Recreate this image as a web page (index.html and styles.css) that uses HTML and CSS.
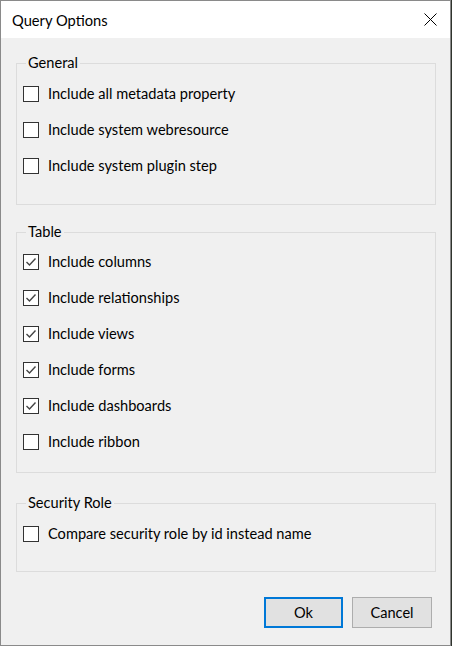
FILE: index.html
```html
<!DOCTYPE html>
<html lang="en">
<head>
<meta charset="utf-8">
<title>Query Options</title>
<link rel="stylesheet" href="styles.css">
</head>
<body>
<div class="window">
  <div class="titlebar">
    <span class="title">Query Options</span>
    <span class="close" aria-label="Close">
      <svg width="13" height="13" viewBox="0 0 13 13"><path d="M0.5 0.5 L12.5 12.5 M12.5 0.5 L0.5 12.5" stroke="#000" stroke-width="1" fill="none"/></svg>
    </span>
  </div>
  <div class="content">
    <fieldset class="group group-general">
      <legend>General</legend>
      <label class="row"><span class="box"></span><span>Include all metadata property</span></label>
      <label class="row"><span class="box"></span><span>Include system webresource</span></label>
      <label class="row"><span class="box"></span><span>Include system plugin step</span></label>
    </fieldset>
    <fieldset class="group group-table">
      <legend>Table</legend>
      <label class="row"><span class="box"><svg width="14" height="14" viewBox="0 0 14 14"><path d="M2.5 7 L5.5 10 L11.5 3.5" stroke="#444" stroke-width="1.4" fill="none"/></svg></span><span>Include columns</span></label>
      <label class="row"><span class="box"><svg width="14" height="14" viewBox="0 0 14 14"><path d="M2.5 7 L5.5 10 L11.5 3.5" stroke="#444" stroke-width="1.4" fill="none"/></svg></span><span>Include relationships</span></label>
      <label class="row"><span class="box"><svg width="14" height="14" viewBox="0 0 14 14"><path d="M2.5 7 L5.5 10 L11.5 3.5" stroke="#444" stroke-width="1.4" fill="none"/></svg></span><span>Include views</span></label>
      <label class="row"><span class="box"><svg width="14" height="14" viewBox="0 0 14 14"><path d="M2.5 7 L5.5 10 L11.5 3.5" stroke="#444" stroke-width="1.4" fill="none"/></svg></span><span>Include forms</span></label>
      <label class="row"><span class="box"><svg width="14" height="14" viewBox="0 0 14 14"><path d="M2.5 7 L5.5 10 L11.5 3.5" stroke="#444" stroke-width="1.4" fill="none"/></svg></span><span>Include dashboards</span></label>
      <label class="row"><span class="box"></span><span>Include ribbon</span></label>
    </fieldset>
    <fieldset class="group group-security">
      <legend>Security Role</legend>
      <label class="row"><span class="box"></span><span>Compare security role by id instead name</span></label>
    </fieldset>
    <div class="actions">
      <button class="btn btn-primary" type="button">Ok</button>
      <button class="btn btn-cancel" type="button">Cancel</button>
    </div>
  </div>
</div>
</body>
</html>
```
FILE: styles.css
```css
html, body {
  margin: 0;
  padding: 0;
}
body {
  background: #2f342d;
  font-family: Lato, "Noto Sans", sans-serif;
  color: #000;
}
.window {
  width: 451px;
  height: 646px;
  box-sizing: border-box;
  border: 1px solid #8a8a8a;
  background: #f0f0f0;
  display: flex;
  flex-direction: column;
}
.titlebar {
  height: 37px;
  flex: none;
  background: #fff;
  display: flex;
  align-items: center;
  justify-content: space-between;
  padding-left: 11px;
}
.title {
  font-size: 14.7px;
  line-height: 20px;
}
.close {
  display: flex;
  margin-right: 13px;
}
.content {
  flex: 1;
  display: flex;
  flex-direction: column;
  padding: 15px 14px 0 15px;
}
.group {
  margin: 0;
  min-width: 0;
  border: 1px solid #dcdcdc;
  padding: 0 0 0 6px;
}
.group legend {
  font-size: 14.6px;
  line-height: 20px;
  padding: 0 2px;
  margin-left: 3px;
}
.group-general {
  padding-top: 3px;
  padding-bottom: 20px;
}
.group-table {
  margin-top: 17px;
  padding-top: 2px;
  padding-bottom: 12px;
}
.group-security {
  margin-top: 20px;
  padding-top: 3px;
  padding-bottom: 19px;
}
.row {
  display: flex;
  align-items: center;
  gap: 9px;
  height: 36px;
  font-size: 14.6px;
  line-height: 18px;
}
.box {
  width: 16px;
  height: 16px;
  box-sizing: border-box;
  border: 1px solid #333;
  background: #fff;
  display: flex;
  align-items: center;
  justify-content: center;
  flex: none;
}
.actions {
  display: flex;
  justify-content: flex-end;
  gap: 9px;
  margin-top: 25px;
  margin-right: 4px;
}
.btn {
  height: 31px;
  box-sizing: border-box;
  background: #e1e1e1;
  border: 1px solid #adadad;
  font-family: inherit;
  font-size: 14.6px;
  color: #000;
  padding: 0;
}
.btn-primary {
  width: 79px;
  border: 2px solid #0078d7;
}
.btn-cancel {
  width: 80px;
}
```
